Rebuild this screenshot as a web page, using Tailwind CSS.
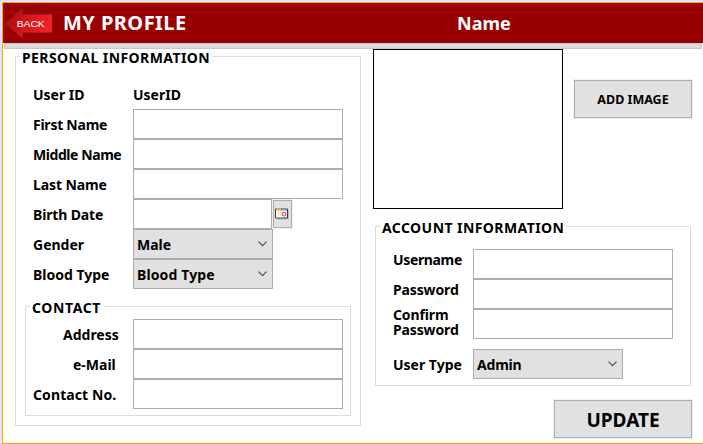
<!DOCTYPE html>
<html lang="en">
<head>
<meta charset="utf-8">
<title>My Profile</title>
<script src="https://cdn.jsdelivr.net/npm/@tailwindcss/browser@4"></script>
</head>
<body class="w-[703px] h-[444px] overflow-hidden bg-[#e4e4fa] pt-[2px] pl-[2px] font-['Noto_Sans','Open_Sans',sans-serif] font-bold text-[14px] leading-[32px] text-black whitespace-nowrap">
<main class="flex flex-col w-[701px] h-[442px] border-l border-t border-b border-[#ffa500] bg-white">
  <header class="flex h-10 shrink-0 items-center bg-[#990000] text-white text-[20px]">
    <button class="w-[50px] h-10 shrink-0" aria-label="Back">
      <svg width="50" height="40" viewBox="0 0 50 40">
        <defs><linearGradient id="arrow" x1="0" y1="0" x2="1" y2="0.3"><stop offset="0" stop-color="#a80508"/><stop offset=".5" stop-color="#cf1519"/><stop offset="1" stop-color="#ee2328"/></linearGradient></defs>
        <path d="M1.500 20.500 20 4.500V11H49.500V30H20V36.500Z" fill="url(#arrow)" stroke="#841014" stroke-width="1"/>
        <text x="13.700" y="23.500" font-family="Liberation Sans, sans-serif" font-weight="400" font-size="9" textLength="28" lengthAdjust="spacingAndGlyphs" fill="#fff">BACK</text>
      </svg>
    </button>
    <h1 class="ml-[10px] w-[394px] tracking-[0.450px]">MY PROFILE</h1>
    <div class="text-[18px]">Name</div>
  </header>
  <div class="h-[6px] shrink-0 ml-px w-[698px] border border-[#c8c8c8] bg-[#dadada]"></div>
  <div class="flex">
    <section class="ml-3 mt-[7px] w-[346px] h-[370px] border border-[#dcdcdc]">
      <h2 class="-mt-[7px] ml-1 h-4 w-[192px] bg-white pl-[2px] leading-[16px] tracking-[0.420px]">PERSONAL INFORMATION</h2>
      <div class="mt-[13px] ml-[17px] grid grid-cols-[100px_210px] auto-rows-[30px]">
        <label>User ID</label><span>UserID</span>
        <label class="tracking-[-0.250px]">First Name</label><div class="border border-[#abadb3]"></div>
        <label class="tracking-[-0.430px]">Middle Name</label><div class="border border-[#abadb3]"></div>
        <label class="tracking-[-0.100px]">Last Name</label><div class="border border-[#abadb3]"></div>
        <label class="tracking-[-0.150px]">Birth Date</label>
        <div class="flex"><div class="w-[139px] border border-[#abadb3]"></div>
          <button class="ml-px mt-px w-[19px] h-7 border border-[#adadad] bg-[#e1e1e1] flex items-center pl-px shadow-[0_0_0_1px_#f0f0f0]">
            <svg width="15" height="12" viewBox="0 0 15 12"><path d="M2 2h12v9.500H2z" fill="#bdbdbd"/><path d="M.5 1h12v9H.5z" fill="#fff" stroke="#383838"/><path d="M1 .5h5v2H1z" fill="#f2b544"/><path d="M6 .5h6v2H6z" fill="#6b9be0"/><path d="M3.500 3.500v6M5.500 3.500v6" stroke="#e2e2e2"/><circle cx="9" cy="6.200" r="1.800" fill="#fff" stroke="#e85050" stroke-width="1.200"/></svg>
          </button></div>
        <label>Gender</label>
        <div class="flex w-[140px] items-center justify-between border border-[#abadb3] bg-[#e1e1e1] pl-[3px] pr-[5px]"><span class="pt-px">Male</span><svg width="9" height="6" viewBox="0 0 9 6" fill="none" stroke="#505050" stroke-width="1.200"><path d="M.5.7 4.500 4.700 8.500.7"/></svg></div>
        <label>Blood Type</label>
        <div class="flex w-[140px] items-center justify-between border border-[#abadb3] bg-[#e1e1e1] pl-[3px] pr-[5px]"><span class="pt-px tracking-[0.130px]">Blood Type</span><svg width="9" height="6" viewBox="0 0 9 6" fill="none" stroke="#505050" stroke-width="1.200"><path d="M.5.7 4.500 4.700 8.500.7"/></svg></div>
      </div>
      <section class="mt-[17px] ml-[9px] w-[326px] h-[110px] border border-[#dcdcdc]">
        <h2 class="-mt-[7px] ml-1 h-4 w-[74px] bg-white pl-[2px] leading-[16px] tracking-[0.600px]">CONTACT</h2>
        <div class="mt-[3px] ml-[7px] grid grid-cols-[100px_210px] auto-rows-[30px]">
          <label class="pl-[30px]">Address</label><div class="border border-[#abadb3]"></div>
          <label class="pl-10">e-Mail</label><div class="border border-[#abadb3]"></div>
          <label class="tracking-[0.100px]">Contact No.</label><div class="border border-[#abadb3]"></div>
        </div>
      </section>
    </section>
    <div class="ml-3 w-[330px]">
      <div class="flex">
        <div class="w-[190px] h-40 border border-black bg-white"></div>
        <button class="ml-[11px] mt-[31px] w-[118px] h-[38px] border border-[#adadad] bg-[#e1e1e1] pt-[2px] text-[12.500px] shadow-[0_0_0_1px_#f0f0f0]">ADD IMAGE</button>
      </div>
      <section class="ml-[2px] mt-[17px] w-[316px] h-40 border border-[#dcdcdc]">
        <h2 class="-mt-[7px] ml-1 h-4 w-[186px] bg-white pl-[2px] leading-[16px] tracking-[0.430px]">ACCOUNT INFORMATION</h2>
        <div class="mt-[13px] ml-[17px] grid grid-cols-[80px_200px] auto-rows-[30px]">
          <label class="leading-[22px] tracking-[-0.350px]">Username</label><div class="border border-[#abadb3]"></div>
          <label class="leading-[22px] tracking-[-0.130px]">Password</label><div class="border border-[#abadb3]"></div>
          <label class="-mt-[2px] leading-[15px] tracking-[-0.130px]">Confirm<br>Password</label><div class="border border-[#abadb3]"></div>
        </div>
        <div class="mt-[10px] ml-[17px] flex h-[30px]"><label class="w-20">User Type</label>
          <div class="flex w-[150px] items-center justify-between border border-[#abadb3] bg-[#e1e1e1] pl-[3px] pr-[5px]"><span class="pt-px tracking-[-0.200px]">Admin</span><svg width="9" height="6" viewBox="0 0 9 6" fill="none" stroke="#505050" stroke-width="1.200"><path d="M.5.7 4.500 4.700 8.500.7"/></svg></div></div>
      </section>
      <button class="ml-[181px] mt-[14px] block w-[138px] h-[38px] border border-[#adadad] bg-[#e1e1e1] pt-px text-[19px] shadow-[0_0_0_1px_#f0f0f0]">UPDATE</button>
    </div>
  </div>
</main>
</body>
</html>
